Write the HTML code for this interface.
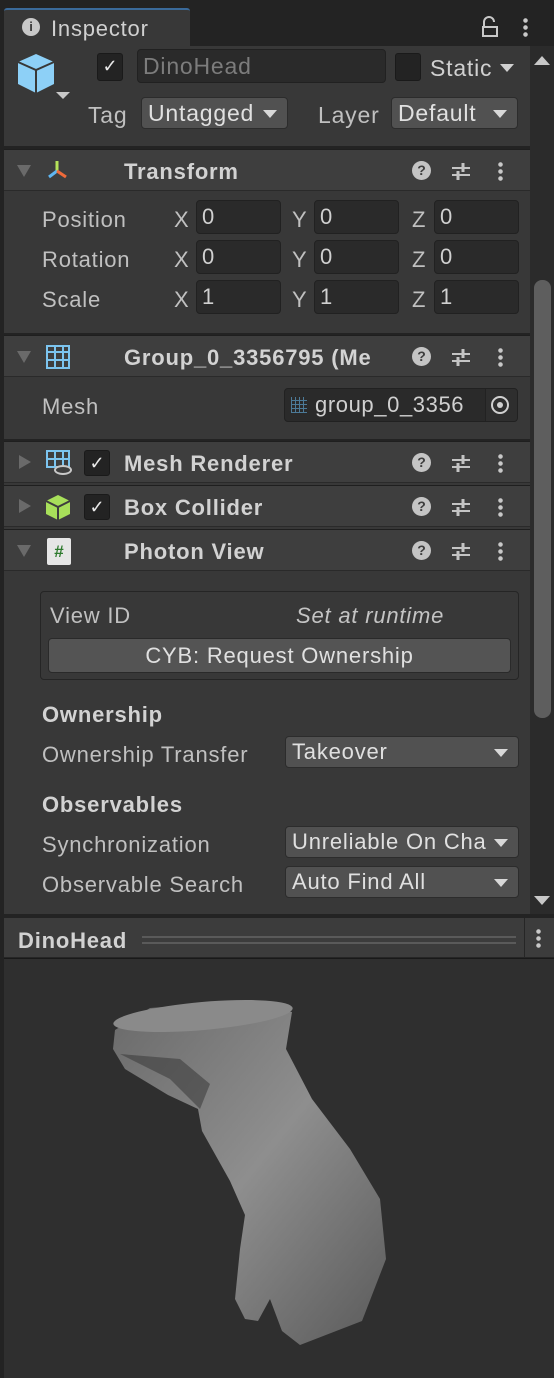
<!DOCTYPE html>
<html><head><meta charset="utf-8"><style>
*{margin:0;padding:0;box-sizing:border-box}
body{width:554px;height:1378px;background:#191919;font-family:"Liberation Sans",sans-serif;color:#c4c4c4;position:relative;overflow:hidden;font-size:22px;letter-spacing:0.8px}
.a{position:absolute}
.hdr{position:absolute;left:4px;width:526px;height:42px;background:#3e3e3e;border-top:1px solid #1f1f1f;border-bottom:1px solid #2a2a2a}
.hdr .t{position:absolute;left:120px;top:9px;font-weight:bold;color:#d2d2d2;font-size:22px;white-space:nowrap}
.tri{position:absolute;width:0;height:0}
.fld{position:absolute;background:#2a2a2a;border:1px solid #212121;border-radius:4px;height:34px;color:#d0d0d0;padding-left:5px;line-height:32px;overflow:hidden;white-space:nowrap}
.dd{position:absolute;background:#515151;border:1px solid #2c2c2c;border-radius:4px;height:32px;color:#e0e0e0;padding-left:6px;line-height:30px;white-space:nowrap;overflow:hidden}
.dd:after{content:"";position:absolute;right:10px;top:12px;border-left:7px solid transparent;border-right:7px solid transparent;border-top:8px solid #d8d8d8}
.lbl{position:absolute;color:#c0c0c0;white-space:nowrap}
.cb{position:absolute;width:26px;height:26px;background:#232323;border:1px solid #1a1a1a;border-radius:3px;color:#e8e8e8;font-size:18px;text-align:center;line-height:24px;letter-spacing:0}
</style></head><body>
<div class="a" style="left:0;top:0;width:554px;height:46px;background:#232323"></div>
<div class="a" style="left:4px;top:8px;width:186px;height:40px;background:#383838;border-top:2px solid #3a6a9a;border-radius:3px 3px 0 0"></div>
<div class="a" style="left:22px;top:18px;width:18px;height:18px;border-radius:50%;background:#c8c8c8;color:#383838;font-size:13px;font-weight:bold;text-align:center;line-height:18px;letter-spacing:0">i</div>
<div class="a" style="left:51px;top:16px;font-size:22px;color:#d0d0d0">Inspector</div>
<svg class="a" style="left:480px;top:16px" width="20" height="22"><path d="M4 10 V6 a5 5 0 0 1 10 0" fill="none" stroke="#c8c8c8" stroke-width="2"/><rect x="3" y="11" width="14" height="9" fill="none" stroke="#c8c8c8" stroke-width="2"/></svg>
<div class="a" style="left:523px;top:17px;width:5px;height:20px;background:radial-gradient(circle,#c8c8c8 2px,transparent 2.5px) 0 0/5px 7px"></div>
<div class="a" style="left:4px;top:46px;width:526px;height:868px;background:#383838"></div>
<div class="a" style="left:530px;top:46px;width:24px;height:868px;background:#2b2b2b"></div>
<div class="a" style="left:534px;top:280px;width:17px;height:438px;background:#5e5e5e;border-radius:8px"></div>
<div class="tri a" style="left:534px;top:56px;border-left:8px solid transparent;border-right:8px solid transparent;border-bottom:9px solid #c8c8c8"></div>
<div class="tri a" style="left:534px;top:896px;border-left:8px solid transparent;border-right:8px solid transparent;border-top:9px solid #c8c8c8"></div>
<svg class="a" style="left:16px;top:50px" width="60" height="56"><path d="M20 4 L38 12 L38 34 L20 43 L2 34 L2 12Z" fill="#8dd0f7"/><path d="M2 12 L20 20 L38 12 M20 20 V43" stroke="#383838" stroke-width="2" fill="none"/><path d="M40 42 h14 l-7 7z" fill="#c8c8c8"/></svg>
<div class="cb" style="left:97px;top:53px;width:26px;height:28px">✓</div>
<div class="fld" style="left:137px;top:49px;width:249px;height:34px;color:#7c7c7c;font-size:23px">DinoHead</div>
<div class="cb" style="left:395px;top:53px;width:26px;height:28px"></div>
<div class="a" style="left:430px;top:55px;font-size:23px;color:#d0d0d0">Static</div>
<div class="tri a" style="left:500px;top:64px;border-left:7px solid transparent;border-right:7px solid transparent;border-top:8px solid #d0d0d0"></div>
<div class="lbl" style="left:88px;top:102px;font-size:23px">Tag</div>
<div class="dd" style="left:141px;top:97px;width:147px;font-size:23px">Untagged</div>
<div class="lbl" style="left:318px;top:102px;font-size:23px">Layer</div>
<div class="dd" style="left:391px;top:97px;width:127px;font-size:23px">Default</div>
<div class="a" style="left:4px;top:146px;width:526px;height:3px;background:#232323"></div>
<div class="hdr" style="top:149px"><div class="t">Transform</div></div>
<div class="lbl" style="left:42px;top:207px">Position</div>
<div class="lbl" style="left:42px;top:247px">Rotation</div>
<div class="lbl" style="left:42px;top:287px">Scale</div>
<div class="a" style="left:4px;top:333px;width:526px;height:3px;background:#232323"></div>
<div class="hdr" style="top:335px"><div class="t">Group_0_3356795 (Me</div></div>
<div class="lbl" style="left:42px;top:394px">Mesh</div>
<div class="fld" style="left:284px;top:388px;width:234px;font-size:22px;padding-left:30px;letter-spacing:0.6px">group_0_3356<span style="position:absolute;right:0;top:0;width:32px;height:32px;background:#2e2e2e;border-left:1px solid #222"></span></div>
<div class="a" style="left:291px;top:397px;width:16px;height:16px;background:repeating-linear-gradient(90deg,#4c7a98 0 1px,transparent 1px 4px),repeating-linear-gradient(0deg,#4c7a98 0 1px,transparent 1px 4px)"></div>
<div class="a" style="left:491px;top:396px;width:18px;height:18px;border:2px solid #d0d0d0;border-radius:50%"></div>
<div class="a" style="left:497px;top:402px;width:6px;height:6px;background:#d0d0d0;border-radius:50%"></div>
<div class="a" style="left:4px;top:439px;width:526px;height:3px;background:#232323"></div>
<div class="hdr" style="top:441px"><div class="t">Mesh Renderer</div></div>
<div class="hdr" style="top:485px"><div class="t">Box Collider</div></div>
<div class="hdr" style="top:529px"><div class="t">Photon View</div></div>
<div class="a" style="left:40px;top:591px;width:479px;height:89px;background:#383838;border:1px solid #252525;border-radius:4px"></div>
<div class="lbl" style="left:50px;top:603px">View ID</div>
<div class="a" style="left:296px;top:603px;font-style:italic;color:#c4c4c4;white-space:nowrap">Set at runtime</div>
<div class="a" style="left:48px;top:638px;width:463px;height:35px;background:#545454;border:1px solid #2a2a2a;border-radius:4px;text-align:center;line-height:33px;color:#e0e0e0">CYB: Request Ownership</div>
<div class="a" style="left:42px;top:702px;font-weight:bold;color:#d2d2d2">Ownership</div>
<div class="lbl" style="left:42px;top:742px">Ownership Transfer</div>
<div class="dd" style="left:285px;top:736px;width:234px">Takeover</div>
<div class="a" style="left:42px;top:792px;font-weight:bold;color:#d2d2d2">Observables</div>
<div class="lbl" style="left:42px;top:832px">Synchronization</div>
<div class="dd" style="left:285px;top:826px;width:234px;padding-right:30px">Unreliable On Cha</div>
<div class="lbl" style="left:42px;top:872px">Observable Search</div>
<div class="dd" style="left:285px;top:866px;width:234px">Auto Find All</div>
<div class="a" style="left:4px;top:914px;width:550px;height:4px;background:#232323"></div>
<div class="a" style="left:4px;top:918px;width:550px;height:40px;background:#3c3c3c;border-bottom:1px solid #262626"></div>
<div class="a" style="left:18px;top:928px;font-weight:bold;color:#d2d2d2">DinoHead</div>
<div class="a" style="left:142px;top:936px;width:374px;height:8px;border-top:2px solid #5a5a5a;border-bottom:2px solid #5a5a5a"></div>
<div class="a" style="left:524px;top:918px;width:1px;height:40px;background:#262626"></div>
<div class="a" style="left:536px;top:928px;width:5px;height:20px;background:radial-gradient(circle,#c8c8c8 2px,transparent 2.5px) 0 0/5px 7px"></div>
<div class="a" style="left:4px;top:959px;width:550px;height:419px;background:#2f2f2f"></div>
<svg class="a" style="left:0;top:959px" width="554" height="419">
<defs><linearGradient id="g" x1="0" y1="0" x2="1" y2="1"><stop offset="0" stop-color="#6a6a6a"/><stop offset=".5" stop-color="#8e8e8e"/><stop offset="1" stop-color="#5a5a5a"/></linearGradient></defs>
<path d="M115 71 L150 49 L220 44 L292 53 L286 90 L312 140 L350 190 L380 240 L386 300 L362 362 L300 386 L282 372 L270 340 L258 362 L245 360 L235 340 L240 290 L245 256 L230 222 L202 172 L198 150 L168 136 L125 110 L113 90Z" fill="url(#g)"/>
<ellipse cx="203" cy="57" rx="90" ry="14" fill="#8a8a8a" transform="rotate(-5 203 57)"/>
<path d="M120 95 L170 120 L200 150 L210 125 L180 100Z" fill="#3e3e3e" opacity=".6"/>
</svg>
<div class="a" style="left:0;top:46px;width:4px;height:1332px;background:#232323"></div>
<script>
function add(h){document.body.insertAdjacentHTML('beforeend',h)}
[149,335,441,485,529].forEach(function(y,i){
 var open=(i==0||i==1||i==4);
 if(open) add('<div class="tri a" style="left:17px;top:'+(y+16)+'px;border-left:7px solid transparent;border-right:7px solid transparent;border-top:12px solid #6a6a6a"></div>');
 else add('<div class="tri a" style="left:19px;top:'+(y+14)+'px;border-top:7px solid transparent;border-bottom:7px solid transparent;border-left:12px solid #6a6a6a"></div>');
 add('<div class="a" style="left:412px;top:'+(y+12)+'px;width:19px;height:19px;border-radius:50%;background:#c4c4c4;color:#3e3e3e;font-size:14px;font-weight:bold;text-align:center;line-height:19px;letter-spacing:0">?</div>');
 add('<svg class="a" style="left:450px;top:'+(y+11)+'px" width="22" height="22"><path d="M2 8h18M2 15h18" stroke="#c4c4c4" stroke-width="2"/><path d="M13 3v9M8 11v9" stroke="#c4c4c4" stroke-width="3"/></svg>');
 add('<div class="a" style="left:498px;top:'+(y+12)+'px;width:5px;height:20px;background:radial-gradient(circle,#c8c8c8 2px,transparent 2.5px) 0 0/5px 7px"></div>');
});
add('<svg class="a" style="left:44px;top:159px" width="32" height="24"><path d="M13 2v10" stroke="#b6e35a" stroke-width="3"/><path d="M13 12l-8 6" stroke="#5fb6f2" stroke-width="3"/><path d="M13 12l9 6" stroke="#f06a3a" stroke-width="3"/></svg>');
add('<div class="a" style="left:46px;top:345px;width:24px;height:24px;border:2px solid #7cc4ef;background:repeating-linear-gradient(90deg,transparent 0 6px,#7cc4ef 6px 8px),repeating-linear-gradient(0deg,transparent 0 6px,#7cc4ef 6px 8px)"></div>');
add('<div class="a" style="left:46px;top:450px;width:24px;height:18px;border:2px solid #7cc4ef;background:repeating-linear-gradient(90deg,transparent 0 6px,#7cc4ef 6px 8px),repeating-linear-gradient(0deg,transparent 0 6px,#7cc4ef 6px 8px)"></div><div class="a" style="left:54px;top:465px;width:18px;height:10px;border:2px solid #c8c8c8;border-radius:50%;background:#3e3e3e"></div>');
add('<svg class="a" style="left:44px;top:493px" width="28" height="28"><path d="M14 2L26 8V21L14 27L2 21V8Z" fill="#a8e05a"/><path d="M2 8L14 14L26 8M14 14V27" stroke="#3e3e3e" stroke-width="2" fill="none"/></svg>');
add('<div class="a" style="left:47px;top:538px;width:24px;height:27px;background:#e6e6e6;border-radius:2px;color:#2e7a2e;font-weight:bold;font-size:17px;text-align:center;line-height:27px;letter-spacing:0">#</div>');
add('<div class="cb" style="left:84px;top:450px">✓</div><div class="cb" style="left:84px;top:494px">✓</div>');
var rows=[[200,'0'],[240,'0'],[280,'1']],cols=[[174,196],[292,314],[412,434]],L=['X','Y','Z'];
rows.forEach(function(r){cols.forEach(function(c,i){
 add('<div class="lbl" style="left:'+c[0]+'px;top:'+(r[0]+7)+'px">'+L[i]+'</div>');
 add('<div class="fld" style="left:'+c[1]+'px;top:'+r[0]+'px;width:85px">'+r[1]+'</div>');
})});
</script>
</body></html>
